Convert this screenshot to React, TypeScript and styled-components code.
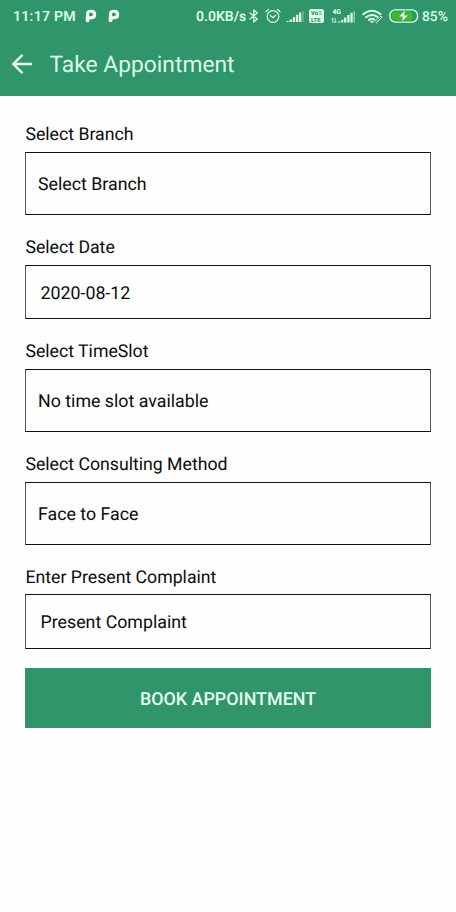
import React from "react";
import styled, { createGlobalStyle } from "styled-components";

const GREEN = "#30956a";
const MINT = "#d9fbe9";

const GlobalStyle = createGlobalStyle`
  *, *::before, *::after { box-sizing: border-box; }
  body { margin: 0; background: #fefefe; font-family: Roboto, sans-serif; color: #0c0c0c; text-rendering: geometricPrecision; }
`;

const Screen = styled.div`
  width: 456px;
  height: 912px;
  display: flex;
  flex-direction: column;
  background: #fefefe;
  overflow: hidden;
`;

const Header = styled.header`
  height: 96px;
  flex: none;
  background: ${GREEN};
  color: ${MINT};
`;

const StatusBar = styled.div`
  height: 32px;
  display: flex;
  align-items: center;
  padding-left: 13px;
`;

const StatusText = styled.span<{ $width: number; $size: number; $weight: number; $spacing?: number }>`
  flex: none;
  width: ${(p) => p.$width}px;
  padding-top: 2px;
  font-size: ${(p) => p.$size}px;
  font-weight: ${(p) => p.$weight};
  letter-spacing: ${(p) => p.$spacing ?? 0}px;
  line-height: 30px;
  white-space: nowrap;
`;

const StatusIcon = styled.svg<{ $gap: number }>`
  flex: none;
  display: block;
  margin-left: ${(p) => p.$gap}px;
  fill: none;
  stroke: ${MINT};
  stroke-linecap: round;
  stroke-linejoin: round;
`;

const Spacer = styled.span<{ $width: number }>`
  flex: none;
  width: ${(p) => p.$width}px;
`;

const TitleBar = styled.div`
  height: 64px;
  display: flex;
  align-items: center;
  padding-left: 11px;
`;

const BackButton = styled.button`
  width: 22px;
  height: 22px;
  padding: 0;
  border: 0;
  background: none;
  margin-bottom: 1px;
`;

const BackIcon = styled.svg`
  display: block;
  fill: none;
  stroke: #e9fff4;
  stroke-width: 2.4;
`;

const Title = styled.h1`
  margin: 0 0 0 16.5px;
  padding-top: 2px;
  font-size: 22.8px;
  font-weight: 400;
  line-height: 62px;
  white-space: nowrap;
`;

const Form = styled.form`
  padding: 25px 25px 0;
  display: flex;
  flex-direction: column;
`;

const Field = styled.div<{ $after: number }>`
  margin-bottom: ${(p) => p.$after}px;
`;

const Label = styled.label<{ $height: number }>`
  display: block;
  height: ${(p) => p.$height}px;
  padding-left: 0.4px;
  line-height: 28px;
  font-size: 17.7px;
  white-space: nowrap;
`;

const Box = styled.div<{ $height: number; $inset: number }>`
  display: flex;
  align-items: center;
  width: 406px;
  height: ${(p) => p.$height}px;
  padding-left: ${(p) => p.$inset}px;
  padding-top: 3px;
  border: 1px solid #111;
  border-left-color: #555;
  border-right-color: #555;
  font-size: 17.8px;
  line-height: 24px;
  white-space: nowrap;
`;

const Submit = styled.button`
  width: 406px;
  height: 60px;
  padding: 4px 0 0;
  border: 0;
  background: ${GREEN};
  color: #e4fff1;
  font: 500 17.9px/24px Roboto, sans-serif;
  text-rendering: geometricPrecision;
  text-align: center;
`;

const fields = [
  { label: "Select Branch", value: "Select Branch", labelHeight: 31, height: 63, inset: 12, after: 19 },
  { label: "Select Date", value: "2020-08-12", labelHeight: 31, height: 54, inset: 14.5, after: 19 },
  { label: "Select TimeSlot", value: "No time slot available", labelHeight: 31, height: 63, inset: 12, after: 19 },
  { label: "Select Consulting Method", value: "Face to Face", labelHeight: 31, height: 63, inset: 12, after: 19 },
  { label: "Enter Present Complaint", value: "Present Complaint", labelHeight: 30, height: 55, inset: 14.5, after: 19 },
];

const ParkingMark = ({ gap }: { gap: number }) => (
  <StatusIcon $gap={gap} width="12" height="14" viewBox="0 0 12 14">
    <path
      fill="#f2fff8"
      stroke="none"
      fillRule="evenodd"
      d="M1 4.8Q1 .8 5.8 .8H6.4Q11.2 .8 11.2 5.4T6.6 10.2H4.6V11.2Q4.4 13.3 2.6 13.3T.6 11.6ZM4.2 4V7.2H6Q8 7.2 8 5.5T6 3.8H4.4Z"
    />
  </StatusIcon>
);

const Bluetooth = () => (
  <StatusIcon $gap={3} width="10" height="14" viewBox="0 0 10 14">
    <path d="M1 4 8.3 10 4.8 13V1L8.3 4 1 10" strokeWidth="1.3" />
  </StatusIcon>
);

const Alarm = () => (
  <StatusIcon $gap={6} width="16" height="16" viewBox="0 0 16 16">
    <circle cx="8" cy="8.5" r="5.8" strokeWidth="1.3" />
    <path d="M1 3.7 3.4 1.4M15 3.7 12.6 1.4M5.3 7.4 8 9.7 10.8 7.1" strokeWidth="1.3" />
  </StatusIcon>
);

const Signal = () => (
  <StatusIcon $gap={5} width="18" height="13" viewBox="0 0 18 13">
    <path d="M1.5 12V11M4.8 12V9.5M8 12V7.3M11.2 12V4.8M14.2 12V2.5" strokeWidth="2.3" strokeLinecap="butt" />
    <path d="M17 12V1" strokeWidth="1.4" opacity=".35" strokeLinecap="butt" />
  </StatusIcon>
);

const TinyText = styled.text`
  stroke: none;
  fill: ${MINT};
  font-family: Roboto, sans-serif;
  font-weight: 900;
`;

const KnockoutText = styled(TinyText)`
  fill: ${GREEN};
`;

const VoLte = () => (
  <StatusIcon $gap={5} width="15" height="14" viewBox="0 0 15 14">
    <rect x="0" y="0" width="15" height="14" rx="2.3" fill={MINT} stroke="none" />
    <KnockoutText x="2" y="6.3" fontSize="5.8">Vo</KnockoutText>
    <path d="M10 2.8h2.8M10 5h2.8" stroke={GREEN} strokeWidth=".8" strokeLinecap="butt" />
    <KnockoutText x="2" y="12.7" fontSize="5.8">LTE</KnockoutText>
  </StatusIcon>
);

const Signal4G = () => (
  <StatusIcon $gap={7} width="24" height="17" viewBox="0 0 24 17">
    <TinyText x="1.4" y="5.6" fontSize="6.8">4G</TinyText>
    <path d="M1.8 14.5V10.2M.7 11.4 1.8 10.2M4.1 10.2V14.5M5.2 13.3 4.1 14.5" strokeWidth=".9" />
    <path d="M8 14.5V13.5M11.2 14.5V11.8M14.2 14.5V9.5M17.4 14.5V7.1M20.5 14.5V4.8" strokeWidth="2.3" strokeLinecap="butt" />
    <path d="M23.2 14.5V3" strokeWidth="1.4" opacity=".6" strokeLinecap="butt" />
  </StatusIcon>
);

const Wifi = () => (
  <StatusIcon $gap={7} width="21" height="15" viewBox="0 0 21 15">
    <path d="M1.2 5.3Q10 -1.7 18.5 5.3M4 8.3Q10 3.7 15.7 8.1M6.9 10.9Q10 8.7 12.3 10.5" strokeWidth="1.9" />
    <path d="M8.3 12.4 10 14 11.7 12.4Q10 11.4 8.3 12.4Z" fill={MINT} strokeWidth=".4" />
    <path d="M13 12.5 16.3 9.2M14.3 14 19.5 8.8Q20.5 7.3 18.8 7.3L17.7 8.2" strokeWidth="1" />
  </StatusIcon>
);

const Battery = () => (
  <StatusIcon $gap={6} width="30" height="14" viewBox="0 0 30 14">
    <rect x="3" y="2.8" width="20.5" height="8.4" rx="3.5" fill="#3ebc24" stroke="none" />
    <rect x=".8" y=".9" width="27.8" height="12.2" rx="5.5" strokeWidth="1.4" />
    <path d="M16.2 1 9.8 7.7H13.6L12.4 13 19.4 6.2H15.4Z" fill="#effff5" stroke={GREEN} strokeWidth=".4" />
  </StatusIcon>
);

export default function App() {
  return (
    <>
      <GlobalStyle />
      <Screen>
        <Header>
          <StatusBar>
            <StatusText $width={63} $size={14.2} $weight={600} $spacing={0.2}>11:17 PM</StatusText>
            <ParkingMark gap={9} />
            <ParkingMark gap={11} />
            <Spacer $width={76} />
            <StatusText $width={50} $size={14} $weight={600}>0.0KB/s</StatusText>
            <Bluetooth />
            <Alarm />
            <Signal />
            <VoLte />
            <Signal4G />
            <Wifi />
            <Battery />
            <Spacer $width={3} />
            <StatusText $width={26} $size={13.8} $weight={500}>85%</StatusText>
          </StatusBar>
          <TitleBar>
            <BackButton aria-label="Back">
              <BackIcon width="22" height="22" viewBox="0 0 22 22">
                <path d="M21 11H2.5M11.5 1.8 2.3 11 11.5 20.2" />
              </BackIcon>
            </BackButton>
            <Title>Take Appointment</Title>
          </TitleBar>
        </Header>
        <Form>
          {fields.map((f) => (
            <Field key={f.label} $after={f.after}>
              <Label $height={f.labelHeight}>{f.label}</Label>
              <Box $height={f.height} $inset={f.inset}>{f.value}</Box>
            </Field>
          ))}
          <Submit type="button">BOOK APPOINTMENT</Submit>
        </Form>
      </Screen>
    </>
  );
}
